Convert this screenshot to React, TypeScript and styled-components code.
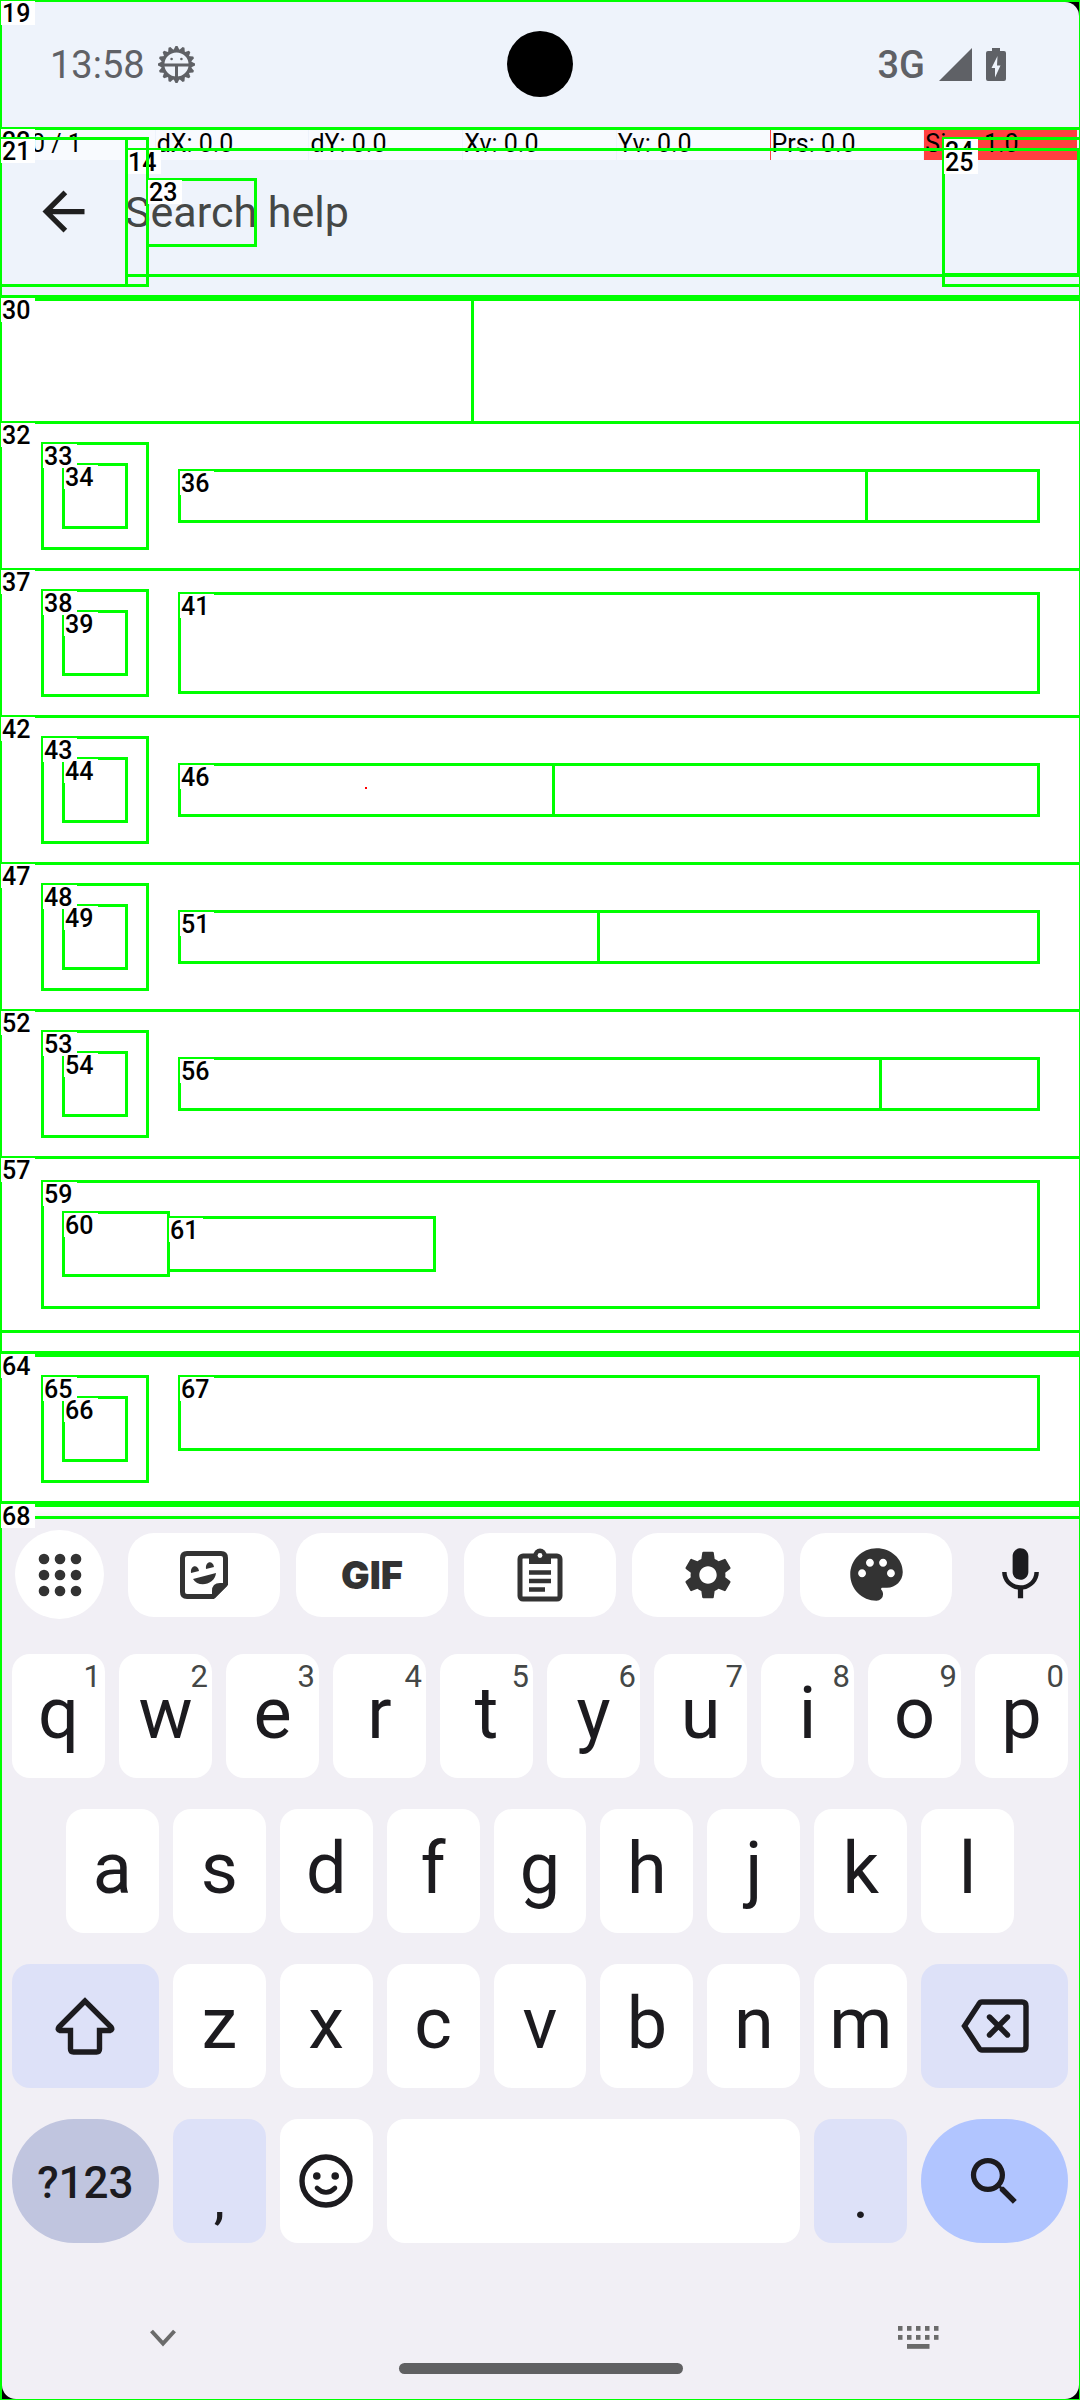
import React from "react";
import styled, { createGlobalStyle, css } from "styled-components";
import { MdArrowBack, MdMic, MdPalette, MdSearch, MdSettings } from "react-icons/md";

const LINE = "#00ff00";
const INK = "#1c1b1f";
const ICON = "#333333";
const STATUS = "#5f6166";

const GlobalStyle = createGlobalStyle`
  * { box-sizing: border-box; }
  body { margin: 0; background: #000000; font-family: Roboto, "Liberation Sans", sans-serif; }
  button { appearance: none; border: 0; padding: 0; margin: 0; background: none; font: inherit; color: inherit; }
  ul { list-style: none; margin: 0; padding: 0; }
  svg { display: block; flex: none; }
`;

const Screen = styled.div`
  border: solid ${LINE};
  border-width: 2px 1px 1px 2px;
  background: #000000;
`;

/* ---------- numbered outlines ---------- */

const Tag = styled.span<{ $raise?: number }>`
  position: absolute;
  z-index: 1;
  top: ${(p) => -(p.$raise ?? 1)}px;
  left: -1px;
  width: 34px;
  height: 24px;
  padding-left: 1px;
  background: #ffffff;
  color: #000000;
  font-size: 25px;
  font-weight: 500;
  line-height: 26px;
`;

const Mark = styled.div<{ $x?: number; $right?: number; $y: number; $w?: number; $h: number }>`
  position: absolute;
  z-index: 2;
  top: ${(p) => p.$y}px;
  height: ${(p) => p.$h}px;
  ${(p) => p.$x !== undefined && `left: ${p.$x}px;`}
  ${(p) => p.$right !== undefined && `right: ${p.$right}px;`}
  ${(p) => p.$w !== undefined && `width: ${p.$w}px;`}
  border: 3px solid ${LINE};
  pointer-events: none;
`;

/* ---------- status bar ---------- */

const StatusBar = styled.header`
  position: relative;
  display: flex;
  justify-content: space-between;
  align-items: center;
  height: 128px;
  padding: 0 73px 0 48px;
  border-bottom: 3px solid ${LINE};
  border-top-right-radius: 14px;
  background: #eef3fb;
  color: ${STATUS};
`;

const StatusGroup = styled.div<{ $gap: number }>`
  display: flex;
  align-items: center;
  gap: ${(p) => p.$gap}px;
`;

const Clock = styled.time`
  font-size: 38px;
  line-height: 44px;
`;

const Network = styled.span`
  font-size: 38px;
  font-weight: 500;
  line-height: 44px;
`;

const Camera = styled.div`
  position: absolute;
  top: 29px;
  left: 50%;
  width: 66px;
  height: 66px;
  margin-left: -34px;
  border-radius: 50%;
  background: #000000;
`;

/* ---------- search header ---------- */

const Header = styled.div`
  position: relative;
  background: #eef3fb;
`;

const PointerBar = styled.div`
  display: grid;
  grid-template-columns: repeat(7, 1fr);
  column-gap: 1px;
  height: 30px;
  padding-right: 2px;
  color: #000000;
  font-size: 25px;
  line-height: 28px;
`;

const PointerCell = styled.span<{ $tone?: "alert" | "edge" }>`
  padding-left: 1px;
  white-space: nowrap;
  background: ${(p) => (p.$tone === "alert" ? "#ff4040" : "#f8fafe")};
  ${(p) => p.$tone === "edge" && css`box-shadow: -1px 0 0 #ff4040;`}
`;

const SearchBar = styled.form`
  display: flex;
  align-items: center;
  gap: 30px;
  height: 135px;
  padding: 0 30px 32px;
  color: #1f1f1f;
`;

const SearchInput = styled.input`
  flex: 1;
  min-width: 0;
  border: 0;
  padding: 0;
  outline: 0;
  background: transparent;
  font-family: Roboto, "Liberation Sans", sans-serif;
  font-size: 43px;
  line-height: 54px;
  color: #1f1f1f;
  &::placeholder { color: #444746; opacity: 1; }
`;

/* ---------- result list ---------- */

const List = styled.ul`
  background: #ffffff;
`;

const Row = styled.li<{ $thick?: boolean; $pad?: number }>`
  position: relative;
  display: flex;
  gap: 29px;
  padding: ${(p) => p.$pad ?? 18}px 39px;
  border-top: ${(p) => (p.$thick ? 6 : 3)}px solid ${LINE};
`;

const Heading = styled.li`
  position: relative;
  display: flex;
  height: 126px;
  border-top: 6px solid ${LINE};
`;

const Spacer = styled.li`
  height: 21px;
  border-top: 3px solid ${LINE};
`;

const ListEnd = styled.li`
  position: relative;
  height: 15px;
  border-top: 6px solid ${LINE};
  background: linear-gradient(#ffffff, #f7f7f8);
`;

const Outline = styled.div`
  position: relative;
  border: 3px solid ${LINE};
`;

const IconOutline = styled(Outline)`
  flex: none;
  width: 108px;
  height: 108px;
  padding: 18px;
`;

const IconInner = styled(Outline)`
  height: 66px;
`;

const TextOutline = styled(Outline)<{ $h: number; $top?: boolean }>`
  display: flex;
  flex: 1;
  height: ${(p) => p.$h}px;
  align-self: ${(p) => (p.$top ? "flex-start" : "center")};
`;

const Title = styled.span<{ $w: number }>`
  width: ${(p) => p.$w}px;
  border-right: 3px solid ${LINE};
`;

const TouchDot = styled.i`
  position: absolute;
  top: 21px;
  left: 184px;
  width: 2px;
  height: 2px;
  background: #ff0000;
`;

const Card = styled(Outline)`
  display: flex;
  align-items: center;
  flex: 1;
  padding: 28px 18px 29px;
`;

const CardIcon = styled(Outline)`
  width: 108px;
  height: 66px;
`;

const CardText = styled(Outline)`
  width: 269px;
  height: 56px;
  margin-left: -3px;
`;

/* ---------- keyboard ---------- */

const Keyboard = styled.section`
  border-top: 3px solid ${LINE};
  border-radius: 0 0 14px 14px;
  background: #f1eff5;
  color: ${INK};
`;

const Tools = styled.div`
  display: flex;
  align-items: center;
  gap: 24px;
  padding: 11px 14px 0 13px;
  color: ${ICON};
`;

const RoundTool = styled.button<{ $plain?: boolean }>`
  display: grid;
  place-items: center;
  flex: none;
  width: 89px;
  height: 89px;
  border-radius: 50%;
  background: ${(p) => (p.$plain ? "transparent" : "#ffffff")};
  color: ${(p) => (p.$plain ? INK : ICON)};
`;

const Chips = styled.div`
  display: grid;
  grid-template-columns: repeat(5, 1fr);
  gap: 16px;
  flex: 1;
`;

const Chip = styled.button`
  display: grid;
  place-items: center;
  height: 84px;
  border-radius: 26px;
  background: #ffffff;
`;

const GifWord = styled.span`
  font-family: Inter, Roboto, sans-serif;
  font-size: 38px;
  font-weight: 900;
  line-height: 40px;
`;

const Keys = styled.div`
  display: grid;
  gap: 31px;
  padding: 35px 11px 0 10px;
`;

const KeyRow = styled.div<{ $cols: string; $inset?: boolean }>`
  display: grid;
  grid-template-columns: ${(p) => p.$cols};
  gap: 14px;
  padding: 0 ${(p) => (p.$inset ? "54px" : "0")};
`;

const tones = { plain: "#ffffff", soft: "#dde1f8", mode: "#c0c5df", go: "#b1c5ff" };

const Key = styled.button<{ $tone?: keyof typeof tones; $pill?: boolean }>`
  position: relative;
  display: grid;
  place-items: center;
  min-width: 0;
  height: 124px;
  border-radius: ${(p) => (p.$pill ? 62 : 18)}px;
  background: ${(p) => tones[p.$tone ?? "plain"]};
`;

const Letter = styled.span`
  padding-bottom: 4px;
  font-size: 72px;
  line-height: 120px;
`;

const Hint = styled.span`
  position: absolute;
  top: 5px;
  right: 4px;
  color: #444746;
  font-size: 31px;
  line-height: 36px;
`;

const ModeText = styled.span`
  padding-top: 4px;
  font-size: 44px;
  font-weight: 500;
  line-height: 52px;
`;

const Punctuation = styled.span`
  align-self: end;
  padding-bottom: 14px;
  font-size: 50px;
  font-weight: 500;
  line-height: 56px;
`;

const NavBar = styled.nav`
  padding: 70px 136px 25px;
  color: #6b6b6b;
`;

const NavIcons = styled.div`
  display: flex;
  justify-content: space-between;
`;

const Handle = styled.div`
  width: 284px;
  height: 11px;
  margin: 0 auto;
  border-radius: 6px;
  background: #606062;
`;

/* ---------- drawings ---------- */

const teeth = Array.from({ length: 16 }, (_, i) => i * 22.5);

const DebugFace = () => (
  <svg width="37" height="37" viewBox="0 0 37 37" fill="none" stroke="currentColor">
    {teeth.map((a) => (
      <path key={a} d="M15 5 17.500 0h2L22 5z" fill="currentColor" stroke="none" transform={`rotate(${a} 18.5 18.5)`} />
    ))}
    <circle cx="18.5" cy="18.5" r="13.6" strokeWidth="3" />
    <path d="M5 19h27M18.5 19v13" strokeWidth="3" />
    <circle cx="13.6" cy="13" r="1.3" fill="currentColor" stroke="none" />
    <circle cx="23.4" cy="13" r="1.3" fill="currentColor" stroke="none" />
  </svg>
);

const Signal = () => (
  <svg width="33" height="33" viewBox="0 0 33 33" fill="currentColor">
    <path d="M33 0v33H0z" />
  </svg>
);

const Battery = () => (
  <svg width="20" height="33" viewBox="0 0 20 33" fill="currentColor">
    <path d="M6 0h8v3h4q2 0 2 2v26q0 2-2 2H2q-2 0-2-2V5q0-2 2-2h4z" />
    <path d="M11.500 8 5.500 20h3.500v9.500l5.500-12h-3.500z" fill="#eef3fb" />
  </svg>
);

const Dots = () => (
  <svg width="44" height="44" viewBox="0 0 44 44" fill="currentColor">
    {[6, 22, 38].map((y) => [6, 22, 38].map((x) => <circle key={`${x}-${y}`} cx={x} cy={y} r="5.300" />))}
  </svg>
);

const Sticker = () => (
  <svg width="50" height="50" viewBox="0 0 50 50" fill="none" stroke="currentColor" strokeWidth="5">
    <path d="M8 3.500h34q4.500 0 4.500 4.500v26L34 46.500H8Q3.500 46.500 3.500 42V8Q3.500 3.500 8 3.500z" />
    <path d="M33 47V41q0-8 8-8h7v3L36 48z" fill="currentColor" stroke="none" />
    <path d="M12 23c-1-8 7-9 8-2zM27 19c-1-8 7-9 8-2zM14 29l23-6c-1 12-18 15-23 6z" fill="currentColor" stroke="none" />
  </svg>
);

const Clipboard = () => (
  <svg width="46" height="54" viewBox="0 0 46 54" fill="none" stroke="currentColor" strokeWidth="5">
    <rect x="3" y="8" width="40" height="43" rx="3" />
    <path d="M12 6h22v10H12z" fill="currentColor" stroke="none" />
    <circle cx="23" cy="7" r="6.500" fill="currentColor" stroke="none" />
    <circle cx="23" cy="7.500" r="2.400" fill="#ffffff" stroke="none" />
    <path d="M12 24.500h22M12 33h22M12 41.500h16" strokeWidth="4.400" />
  </svg>
);

const Shift = () => (
  <svg width="60" height="58" viewBox="0 0 60 58" fill="none" stroke="currentColor" strokeWidth="5.400" strokeLinejoin="miter">
    <path d="M30 4 4 30q-2 3 1 3.500h10.500V52q0 3 3 3h23q3 0 3-3V33.500H55q3-.5 1-3.500z" />
  </svg>
);

const Backspace = () => (
  <svg width="68" height="54" viewBox="0 0 68 54" fill="none" stroke="currentColor" strokeWidth="5.400">
    <path d="M21 3h40q4 0 4 4v40q0 4-4 4H21q-2 0-3-2L3.500 27 18 5q1-2 3-2z" />
    <path d="M28.500 18l18 18M46.500 18l-18 18" strokeLinecap="round" />
  </svg>
);

const Smile = () => (
  <svg width="54" height="54" viewBox="0 0 54 54" fill="none" stroke="currentColor" strokeWidth="5.400">
    <circle cx="27" cy="27" r="24" />
    <circle cx="17.800" cy="22" r="3.800" fill="currentColor" stroke="none" />
    <circle cx="36.200" cy="22" r="3.800" fill="currentColor" stroke="none" />
    <path d="M18 34q9 9 18 0" strokeWidth="4.600" strokeLinecap="round" />
  </svg>
);

const Chevron = () => (
  <svg width="50" height="50" viewBox="0 0 50 50" fill="none" stroke="currentColor" strokeWidth="4">
    <path d="M13.500 18 25 30.500 36.500 18" />
  </svg>
);

const KeyboardIcon = () => (
  <svg width="50" height="50" viewBox="0 0 50 50" fill="currentColor">
    {[13, 22].map((y) => [5, 14, 23, 32, 41].map((x) => <rect key={`${x}-${y}`} x={x} y={y} width="4.500" height="4.800" />))}
    <rect x="14" y="31" width="22.500" height="4.800" />
  </svg>
);

/* ---------- data ---------- */

const pointer: { text: string; tone?: "alert" | "edge" }[] = [
  { text: "P: 0 / 1" },
  { text: "dX: 0.0" },
  { text: "dY: 0.0" },
  { text: "Xv: 0.0" },
  { text: "Yv: 0.0" },
  { text: "Prs: 0.0", tone: "edge" },
  { text: "Size: 1.0", tone: "alert" },
];

type Result = { ids: [number, number, number, number]; h: number; title?: number; dot?: boolean; thick?: boolean };

const results: Result[] = [
  { ids: [32, 33, 34, 36], h: 54, title: 687 },
  { ids: [37, 38, 39, 41], h: 102 },
  { ids: [42, 43, 44, 46], h: 54, title: 374, dot: true },
  { ids: [47, 48, 49, 51], h: 54, title: 419 },
  { ids: [52, 53, 54, 56], h: 54, title: 701 },
];

const ResultRow = ({ ids, h, title, dot, thick }: Result) => (
  <Row $thick={thick}>
    <Tag $raise={thick ? 3 : 1}>{ids[0]}</Tag>
    <IconOutline>
      <Tag>{ids[1]}</Tag>
      <IconInner>
        <Tag>{ids[2]}</Tag>
      </IconInner>
    </IconOutline>
    <TextOutline $h={h} $top={thick}>
      <Tag>{ids[3]}</Tag>
      {title && <Title $w={title} />}
      {dot && <TouchDot />}
    </TextOutline>
  </Row>
);

export default function App() {
  return (
    <Screen>
      <GlobalStyle />
      <StatusBar>
        <Tag>19</Tag>
        <StatusGroup $gap={13}>
          <Clock>13:58</Clock>
          <DebugFace />
        </StatusGroup>
        <Camera />
        <StatusGroup $gap={14}>
          <Network>3G</Network>
          <Signal />
          <Battery />
        </StatusGroup>
      </StatusBar>

      <Header>
        <Tag>22</Tag>
        <PointerBar>
          {pointer.map((c) => (
            <PointerCell key={c.text} $tone={c.tone}>
              {c.text}
            </PointerCell>
          ))}
        </PointerBar>
        <SearchBar onSubmit={(e) => e.preventDefault()}>
          <button type="button" aria-label="Back">
            <MdArrowBack size={63} />
          </button>
          <SearchInput type="text" aria-label="Search help" placeholder="Search help" />
        </SearchBar>
        <Mark $x={123} $right={-1} $y={18} $h={129}>
          <Tag>14</Tag>
        </Mark>
        <Mark $x={-3} $y={7} $w={129} $h={150} />
        <Mark $x={-3} $y={7} $w={150} $h={150}>
          <Tag>21</Tag>
        </Mark>
        <Mark $x={144} $y={48} $w={111} $h={69}>
          <Tag>23</Tag>
        </Mark>
        <Mark $right={-3} $y={7} $w={140} $h={150}>
          <Tag>24</Tag>
        </Mark>
        <Mark $right={-3} $y={18} $w={140} $h={128}>
          <Tag>25</Tag>
        </Mark>
      </Header>

      <List>
        <Heading>
          <Tag $raise={3}>30</Tag>
          <Title $w={472} />
        </Heading>
        {results.map((r) => (
          <ResultRow key={r.ids[0]} {...r} />
        ))}
        <Row $pad={21}>
          <Tag>57</Tag>
          <Card>
            <Tag>59</Tag>
            <CardIcon>
              <Tag>60</Tag>
            </CardIcon>
            <CardText>
              <Tag>61</Tag>
            </CardText>
          </Card>
        </Row>
        <Spacer />
        <ResultRow ids={[64, 65, 66, 67]} h={76} thick />
        <ListEnd>
          <Tag $raise={3}>68</Tag>
        </ListEnd>
      </List>

      <Keyboard>
        <Tools>
          <RoundTool aria-label="More tools">
            <Dots />
          </RoundTool>
          <Chips>
            <Chip aria-label="Stickers">
              <Sticker />
            </Chip>
            <Chip>
              <GifWord>GIF</GifWord>
            </Chip>
            <Chip aria-label="Clipboard">
              <Clipboard />
            </Chip>
            <Chip aria-label="Settings">
              <MdSettings size={58} />
            </Chip>
            <Chip aria-label="Theme">
              <MdPalette size={63} />
            </Chip>
          </Chips>
          <RoundTool $plain aria-label="Voice input">
            <MdMic size={63} />
          </RoundTool>
        </Tools>

        <Keys>
          <KeyRow $cols="repeat(10, 1fr)">
            {[..."qwertyuiop"].map((k, i) => (
              <Key key={k}>
                <Letter>{k}</Letter>
                <Hint>{(i + 1) % 10}</Hint>
              </Key>
            ))}
          </KeyRow>
          <KeyRow $cols="repeat(9, 1fr)" $inset>
            {[..."asdfghjkl"].map((k) => (
              <Key key={k}>
                <Letter>{k}</Letter>
              </Key>
            ))}
          </KeyRow>
          <KeyRow $cols="147fr repeat(7, 93fr) 147fr">
            <Key $tone="soft" aria-label="Shift">
              <Shift />
            </Key>
            {[..."zxcvbnm"].map((k) => (
              <Key key={k}>
                <Letter>{k}</Letter>
              </Key>
            ))}
            <Key $tone="soft" aria-label="Delete">
              <Backspace />
            </Key>
          </KeyRow>
          <KeyRow $cols="147fr 93fr 93fr 414fr 93fr 147fr">
            <Key $tone="mode" $pill>
              <ModeText>?123</ModeText>
            </Key>
            <Key $tone="soft">
              <Punctuation>,</Punctuation>
            </Key>
            <Key aria-label="Emoji">
              <Smile />
            </Key>
            <Key aria-label="Space" />
            <Key $tone="soft">
              <Punctuation>.</Punctuation>
            </Key>
            <Key $tone="go" $pill aria-label="Search">
              <MdSearch size={63} />
            </Key>
          </KeyRow>
        </Keys>

        <NavBar>
          <NavIcons>
            <button aria-label="Hide keyboard">
              <Chevron />
            </button>
            <button aria-label="Switch keyboard">
              <KeyboardIcon />
            </button>
          </NavIcons>
          <Handle />
        </NavBar>
      </Keyboard>
    </Screen>
  );
}
